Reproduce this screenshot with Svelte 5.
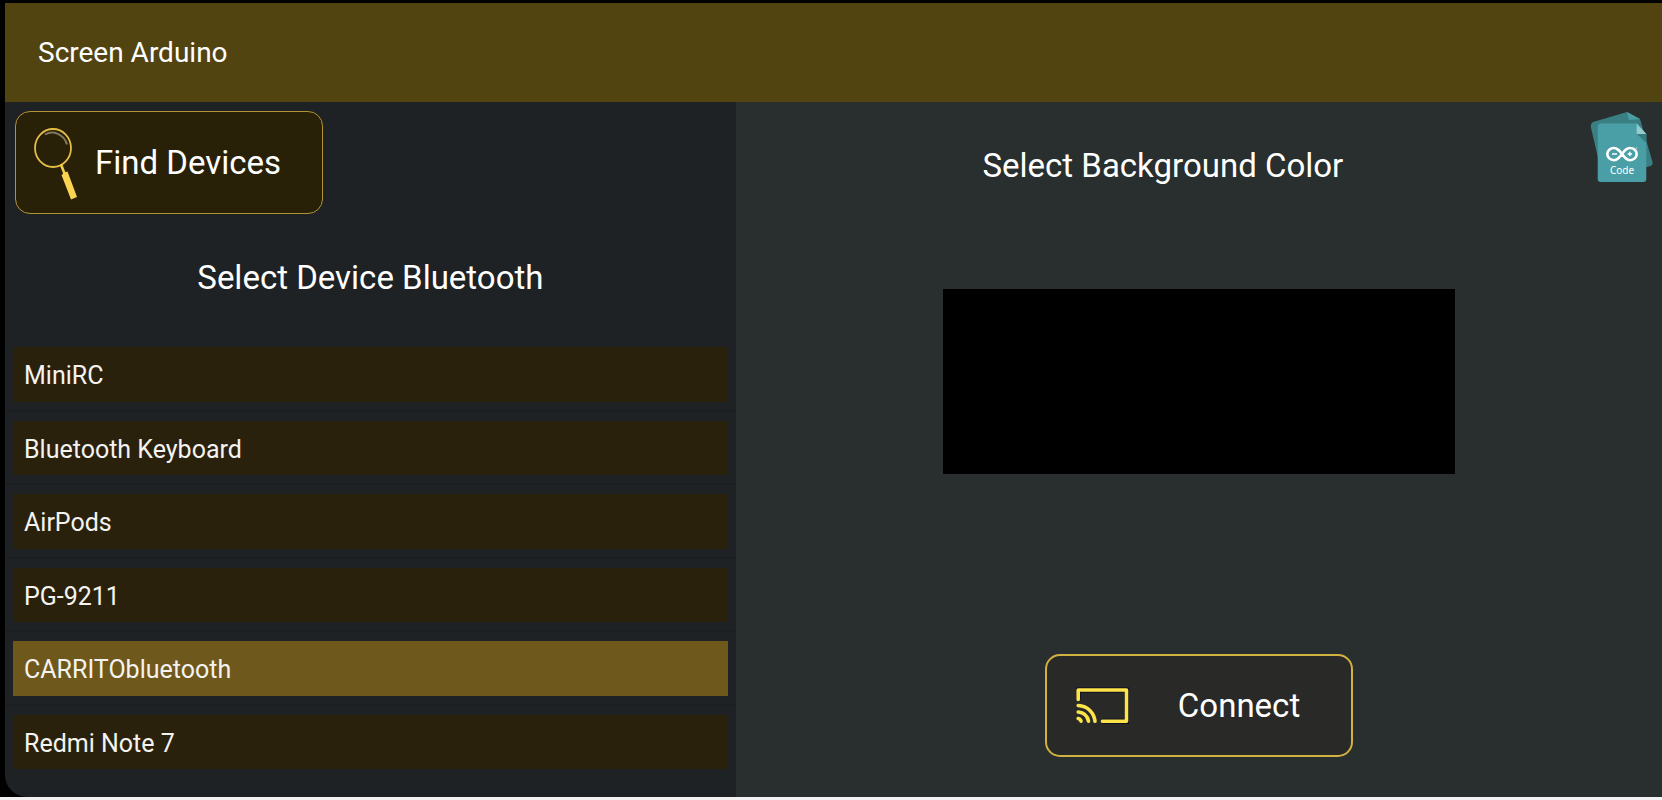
<script lang="ts">
  const devices = [
    'MiniRC',
    'Bluetooth Keyboard',
    'AirPods',
    'PG-9211',
    'CARRITObluetooth',
    'Redmi Note 7'
  ];

  let selected = $state('CARRITObluetooth');
  let color = $state('#000000');
</script>

<div class="page">
  <div class="app">
    <header>
      <h1>Screen Arduino</h1>
    </header>

    <main>
      <section class="devices">
        <button class="action find" type="button">
          <svg width="44" height="74" viewBox="0 0 44 74" aria-hidden="true">
            <ellipse cx="20" cy="22" rx="18" ry="19" fill="none" stroke="#e3bd45" stroke-width="1.8" />
            <path d="M12 8.500C20 4 31 8 34 18.500" fill="none" stroke="#817862" stroke-width="2" />
            <path d="M28 38.500l3.500 9" stroke="#f5cd4b" stroke-width="2.600" />
            <path d="M28.500 49l1.500-1 0-1 4.500-1.500 9.500 25.500-6 2.500z" fill="#fad352" />
          </svg>
          <span>Find Devices</span>
        </button>

        <h2>Select Device Bluetooth</h2>

        <ul>
          {#each devices as device (device)}
            <li>
              <button
                class="device"
                class:selected={device === selected}
                type="button"
                aria-pressed={device === selected}
                onclick={() => (selected = device)}
              >
                {device}
              </button>
            </li>
          {/each}
        </ul>
      </section>

      <section class="screen">
        <div class="top">
          <label for="background">Select Background Color</label>
          <button class="code" type="button" aria-label="Arduino code">
            <svg width="64" height="72" viewBox="0 0 64 72" aria-hidden="true">
              <path d="M3 10L37 0l13 7 12.500 43q.6 3-2 4L13 67 1 16Q0 12 3 10z" fill="#3a7f83" />
              <path d="M37 0l2 8 11-1z" fill="#4a9fa5" />
              <path d="M11 11.500h35.700L56.300 22v45q0 3-3 3H11q-3.300 0-3.300-3V15q0-3.500 3.300-3.500z" fill="#4a9fa6" />
              <path d="M47 22h9.300v9z" fill="#357a7f" />
              <path d="M46.700 11.500V22h9.600z" fill="#94ccce" />
              <path
                d="M32 42C28.500 37.500 27 36 24 36a6.700 6.100 0 0 0 0 12.200c3 0 4.500-1.600 8-6.200s5-6 8-6a6.700 6.100 0 0 1 0 12.200c-3 0-4.500-1.600-8-6.200z"
                fill="none"
                stroke="#fff"
                stroke-width="2.600"
              />
              <path d="M22 42h5M37.500 42h4.600M39.800 39.700v4.600" stroke="#fff" stroke-width="1.500" />
              <circle cx="46.500" cy="36" r=".8" fill="#b9dddd" />
              <text x="32" y="62" text-anchor="middle">Code</text>
            </svg>
          </button>
        </div>

        <input id="background" type="color" bind:value={color} />

        <button class="action connect" type="button">
          <svg width="54" height="38" viewBox="0 0 54 38" fill="none" aria-hidden="true">
            <path d="M2.200 12.500V3h48.300v31.200H26.500" stroke="#070a1c" stroke-width="5" />
            <g stroke="#fde448" stroke-width="3.600" stroke-linecap="round" stroke-linejoin="round">
              <path d="M2.200 12.500V3h48.300v31.200H26.500" />
              <path d="M2.200 18.500C12 19 18 26 19 34.200" />
              <path d="M2.200 25C8 25.500 11.500 29 12.500 34.200" />
              <path d="M2.200 31.500Q4.500 32 5 34.200" />
            </g>
          </svg>
          <span>Connect</span>
        </button>
      </section>
    </main>
  </div>
</div>

<style>
  :global(body) {
    margin: 0;
    background: #f2f2f2;
  }

  .page {
    box-sizing: border-box;
    min-height: calc(100vh - 3px);
    padding: 3px 0 0 5px;
    display: flex;
    background: #000;
    color: #fff;
    font-family: Roboto, 'Noto Sans', sans-serif;
  }

  .app {
    flex: 1;
    display: flex;
    flex-direction: column;
    overflow: hidden;
    border-bottom-left-radius: 22px;
    background: #1e2224;
  }

  header {
    display: flex;
    align-items: center;
    height: 99px;
    padding: 0 33px;
    background: #524411;
  }

  h1,
  h2 {
    margin: 0;
    font-weight: 400;
  }

  h1 {
    font-size: 28px;
  }

  h2,
  .top label {
    font-size: 33px;
    line-height: 40px;
    text-align: center;
  }

  main {
    flex: 1;
    display: flex;
  }

  button {
    font: inherit;
    color: inherit;
    cursor: pointer;
  }

  .action {
    box-sizing: border-box;
    display: flex;
    align-items: center;
    width: 308px;
    height: 103px;
    border-radius: 15px;
    font-size: 33px;
  }

  .devices {
    flex: 0 0 44.1%;
    display: flex;
    flex-direction: column;
    padding-bottom: 18px;
    box-sizing: border-box;
  }

  .find {
    gap: 18px;
    margin: 9px 10px 0;
    padding: 0 17px;
    border: 1px solid #b39434;
    background: #292107;
  }

  .devices h2 {
    margin: 44px 0 40px;
  }

  ul {
    flex: 1;
    display: flex;
    flex-direction: column;
    margin: 0;
    padding: 0;
    list-style: none;
  }

  li {
    flex: 1;
    display: flex;
    padding: 9px 8px 8px;
    border-bottom: 2px solid #1b1f21;
  }

  li:last-child {
    border-bottom-color: transparent;
  }

  .device {
    flex: 1;
    padding: 3px 11px 0;
    border: 0;
    background: #29210c;
    color: #f4f3f0;
    font-size: 25px;
    text-align: left;
  }

  .device.selected {
    background: #6f581b;
  }

  .screen {
    flex: 1;
    display: flex;
    flex-direction: column;
    align-items: center;
    padding-bottom: 40px;
    background: #292e2e;
  }

  .top {
    align-self: stretch;
    display: flex;
    align-items: flex-start;
    padding: 10px 8px 0 0;
  }

  .top label {
    flex: 1;
    margin-top: 34px;
  }

  .code {
    padding: 0;
    border: 0;
    background: none;
    line-height: 0;
  }

  .code text {
    fill: #fff;
    font: 10px 'Noto Sans', sans-serif;
  }

  input[type='color'] {
    box-sizing: border-box;
    width: 512px;
    height: 185px;
    margin: 103px 0 auto;
    padding: 0;
    border: 0;
    background: none;
    cursor: pointer;
  }

  input[type='color']::-webkit-color-swatch-wrapper {
    padding: 0;
  }

  input[type='color']::-webkit-color-swatch {
    border: 0;
  }

  .connect {
    gap: 48px;
    padding: 0 29px;
    border: 2px solid #d3b140;
    background: #292a28;
  }
</style>
